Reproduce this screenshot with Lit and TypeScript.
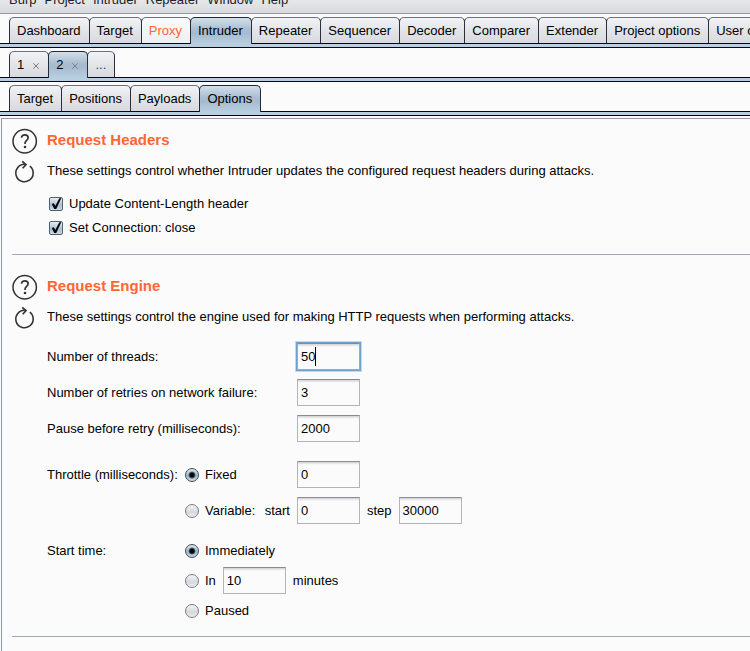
import { LitElement, html, css, svg, nothing } from "lit";
import { customElement, property, state } from "lit/decorators.js";
import { classMap } from "lit/directives/class-map.js";

interface Tab {
  label: string;
  closable?: boolean;
  kind?: "alert" | "more";
}

const MENUS = ["Burp", "Project", "Intruder", "Repeater", "Window", "Help"];

const TOOLS: Tab[] = [
  { label: "Dashboard" },
  { label: "Target" },
  { label: "Proxy", kind: "alert" },
  { label: "Intruder" },
  { label: "Repeater" },
  { label: "Sequencer" },
  { label: "Decoder" },
  { label: "Comparer" },
  { label: "Extender" },
  { label: "Project options" },
  { label: "User options" },
];

const ATTACKS: Tab[] = [
  { label: "1", closable: true },
  { label: "2", closable: true },
  { label: "...", kind: "more" },
];

const PAGES: Tab[] = [
  { label: "Target" },
  { label: "Positions" },
  { label: "Payloads" },
  { label: "Options" },
];

@customElement("tab-strip")
export class TabStrip extends LitElement {
  @property({ attribute: false }) tabs: Tab[] = [];
  @property({ type: Number }) selected = 0;

  static styles = css`
    :host {
      display: block;
      padding-top: 3px;
    }
    .tabs {
      display: flex;
      align-items: flex-start;
      height: 26px;
      padding-left: 9px;
      border-bottom: 1px solid #06061a;
    }
    .tab {
      flex: none;
      display: flex;
      align-items: center;
      box-sizing: border-box;
      height: 26px;
      margin: 0 -1px 0 0;
      padding: 0 8px 0 7px;
      border: 1px solid #2c2e3c;
      border-top-color: #6c7078;
      border-bottom: 0;
      border-radius: 5px 5px 0 0;
      background: linear-gradient(#f2f3f6, #e2e4e8 50%, #d8dae0);
      color: #000;
      font: 13px/16px "Liberation Sans", Arial, sans-serif;
      white-space: nowrap;
    }
    .alert {
      background: linear-gradient(#fafafc, #eeeff2);
      color: #ff6633;
    }
    .more {
      color: #2c4a6c;
    }
    .selected {
      height: 27px;
      border-color: #1c2a3a;
      border-bottom: 0;
      background: linear-gradient(#d4dfe8, #a8bdd1 45%, #a6bbcf 60%, #b8cfe0);
    }
    .close {
      width: 6px;
      height: 6px;
      margin: 2px 1px 0 9px;
      stroke: #7c8086;
    }
    .band {
      height: 3px;
      background: #b8cfe0;
      border-bottom: 1px solid #06061a;
    }
  `;

  render() {
    return html`
      <div class="tabs" role="tablist">
        ${this.tabs.map(
          (t, i) => html`<button
            role="tab"
            aria-selected=${i === this.selected ? "true" : "false"}
            class=${classMap({
              tab: true,
              selected: i === this.selected,
              alert: t.kind === "alert",
              more: t.kind === "more",
            })}
            @click=${() => (this.selected = i)}
          >${t.label}${t.closable
              ? html`<svg class="close" viewBox="0 0 6 6" aria-hidden="true">
                  <path d="M0.3 0.3L5.7 5.7M5.7 0.3L0.3 5.7" />
                </svg>`
              : nothing}</button>`
        )}
      </div>
      <div class="band"></div>
    `;
  }
}

const helpIcon = svg`
  <circle cx="12.7" cy="13.3" r="11.7" fill="none" stroke="#333" stroke-width="1.5" />
  <path d="M9.4 9.7C9.7 7.9 11 6.9 12.8 6.9C14.8 6.9 16.1 8.1 16.1 9.8C16.1 12.2 13 12.6 13 15.3V16"
    fill="none" stroke="#333" stroke-width="1.7" />
  <circle cx="13" cy="19" r="1.3" fill="#333" />`;

const resetIcon = svg`
  <path d="M15.8 6.1A8.7 8.7 0 1 1 10.8 4.3" fill="none" stroke="#333" stroke-width="1.6" />
  <path d="M8.2 1.4L12 4.5L8.7 8.2" fill="none" stroke="#333" stroke-width="1.7" />`;

@customElement("settings-section")
export class SettingsSection extends LitElement {
  @property() heading = "";
  @property() description = "";

  static styles = css`
    :host {
      display: block;
      margin-left: 10px;
      border-bottom: 1px solid #a4a8b6;
    }
    .head,
    .about {
      display: grid;
      grid-template-columns: 35px 1fr;
      align-items: center;
    }
    .head {
      height: 26px;
    }
    .about {
      height: 36px;
    }
    button {
      display: block;
      justify-self: start;
      padding: 0;
      border: 0;
      background: none;
    }
    .help svg {
      display: block;
      width: 26px;
      height: 26px;
    }
    .reset {
      padding-left: 2px;
    }
    .reset svg {
      display: block;
      width: 22px;
      height: 24px;
    }
    h2 {
      margin: 0 0 3px;
      color: #ff6633;
      font: bold 15px/18px "Liberation Sans", Arial, sans-serif;
    }
    p {
      margin: 0 0 3px;
      white-space: nowrap;
    }
    .body {
      padding-left: 35px;
    }
  `;

  render() {
    return html`
      <div class="head">
        <button class="help" aria-label="Help">
          <svg viewBox="0 0 26 26">${helpIcon}</svg>
        </button>
        <h2>${this.heading}</h2>
      </div>
      <div class="about">
        <button class="reset" aria-label="Restore defaults">
          <svg viewBox="0 0 22 24">${resetIcon}</svg>
        </button>
        <p>${this.description}</p>
      </div>
      <div class="body"><slot></slot></div>
    `;
  }
}

@customElement("app-root")
export class AppRoot extends LitElement {
  @state() private throttle = "fixed";
  @state() private start = "now";

  static styles = css`
    :host {
      display: flex;
      flex-direction: column;
      min-height: 100vh;
      overflow: hidden;
      background: #fbfbfb;
      color: #000;
      font: 13px/16px "Liberation Sans", Arial, sans-serif;
    }
    .menu {
      display: flex;
      align-items: flex-end;
      gap: 8px;
      height: 13px;
      padding-left: 9px;
      overflow: hidden;
      border-bottom: 1px solid #9498a0;
      background: linear-gradient(#e6e7ea, #d8dae0);
    }
    .menu button {
      margin: 0 0 5px;
      padding: 0;
      border: 0;
      background: none;
      color: #222;
      font: inherit;
    }
    .panel {
      flex: 1;
      margin: 2px 0 0 1px;
      padding-top: 9px;
      border: solid #9498a8;
      border-width: 1px 0 0 1px;
    }
    settings-section + settings-section {
      margin-top: 19px;
    }
    .checks {
      display: flex;
      flex-direction: column;
      padding: 2px 0 14px 2px;
    }
    .checks label {
      height: 24px;
    }
    label {
      display: flex;
      align-items: center;
      gap: 6px;
      white-space: nowrap;
    }
    input {
      box-sizing: border-box;
      flex: none;
      margin: 0;
      appearance: none;
      outline: none;
    }
    input[type="checkbox"] {
      width: 14px;
      height: 14px;
      border: 1px solid #52616f;
      border-radius: 2px;
      background: linear-gradient(#e4edf4, #a9bfd2 60%, #c6dae8);
    }
    input[type="checkbox"]:checked::before {
      content: "";
      display: block;
      width: 12px;
      height: 12px;
      background: #000;
      clip-path: polygon(14% 50%, 32% 44%, 44% 66%, 78% 2%, 94% 2%, 52% 92%, 36% 92%);
    }
    input[type="radio"] {
      width: 14px;
      height: 14px;
      border: 1px solid #777b82;
      border-radius: 50%;
      background: linear-gradient(#f4f5f7, #d6d8dd 60%, #eceef0);
    }
    input[type="radio"]:checked {
      border-color: #3c4c5c;
      background: radial-gradient(circle, #050505 0 2px, transparent 4px),
        linear-gradient(#dbe6ef, #9fb8cd 60%, #c8dcea);
    }
    input[type="text"] {
      width: 63px;
      height: 27px;
      padding: 0 3px;
      border: 1px solid #b4b4b8;
      border-top-color: #8c8c90;
      background: linear-gradient(#d0d0d3, #f0f0f1 2px, #fbfbfb 3px);
      color: #000;
      font: inherit;
    }
    .active {
      position: relative;
      display: flex;
      box-shadow: 0 0 0 1px #72a0cc, 0 0 0 2px #c2d8ec;
    }
    .active input[type="text"] {
      border-color: #8ab0d4;
      border-top-color: #7c8ca0;
    }
    .caret {
      position: absolute;
      left: 18px;
      top: 4px;
      width: 1px;
      height: 19px;
      background: #000;
    }
    .form {
      display: flex;
      flex-direction: column;
      gap: 19px;
      padding: 7px 0 12px;
    }
    .group {
      display: flex;
      flex-direction: column;
      gap: 9px;
    }
    .group.times {
      gap: 3px;
      margin-top: -6px;
    }
    .row {
      display: grid;
      grid-template-columns: 138px 112px 1fr;
      align-items: center;
      height: 27px;
    }
    .wide {
      grid-column: span 2;
    }
    .field,
    .split {
      display: flex;
      align-items: center;
    }
    .field {
      justify-self: start;
      gap: 7px;
    }
    .split {
      justify-content: space-between;
      padding-right: 7px;
    }
    .choices {
      grid-column: 2 / 4;
    }
  `;

  private radio(group: "throttle" | "start", value: string, text: string) {
    return html`<label
      ><input
        type="radio"
        name=${group}
        .checked=${this[group] === value}
        @change=${() => (this[group] = value)}
      />${text}</label>`;
  }

  render() {
    return html`
      <nav class="menu">${MENUS.map((m) => html`<button>${m}</button>`)}</nav>
      <tab-strip .tabs=${TOOLS} selected="3"></tab-strip>
      <tab-strip .tabs=${ATTACKS} selected="1"></tab-strip>
      <tab-strip .tabs=${PAGES} selected="3"></tab-strip>
      <main class="panel">
        <settings-section
          heading="Request Headers"
          description="These settings control whether Intruder updates the configured request headers during attacks."
        >
          <div class="checks">
            <label><input type="checkbox" checked />Update Content-Length header</label>
            <label><input type="checkbox" checked />Set Connection: close</label>
          </div>
        </settings-section>
        <settings-section
          heading="Request Engine"
          description="These settings control the engine used for making HTTP requests when performing attacks."
        >
          <div class="form">
            <div class="group">
              <div class="row">
                <label class="wide" for="threads">Number of threads:</label>
                <span class="field"><span class="active"
                  ><input id="threads" type="text" value="50" /><span class="caret"></span></span></span>
              </div>
              <div class="row">
                <label class="wide" for="retries">Number of retries on network failure:</label>
                <span class="field"><input id="retries" type="text" value="3" /></span>
              </div>
              <div class="row">
                <label class="wide" for="pause">Pause before retry (milliseconds):</label>
                <span class="field"><input id="pause" type="text" value="2000" /></span>
              </div>
            </div>
            <div class="group" role="radiogroup" aria-labelledby="throttle">
              <div class="row">
                <span id="throttle">Throttle (milliseconds):</span>
                ${this.radio("throttle", "fixed", "Fixed")}
                <span class="field"><input type="text" aria-label="Fixed throttle" value="0" /></span>
              </div>
              <div class="row">
                <span></span>
                <span class="split">
                  ${this.radio("throttle", "variable", "Variable:")}
                  <label for="from">start</label>
                </span>
                <span class="field">
                  <input id="from" type="text" value="0" />
                  <label for="step">step</label>
                  <input id="step" type="text" value="30000" />
                </span>
              </div>
            </div>
            <div class="group times" role="radiogroup" aria-labelledby="when">
              <div class="row">
                <span id="when">Start time:</span>
                ${this.radio("start", "now", "Immediately")}
              </div>
              <div class="row">
                <span class="field choices">
                  ${this.radio("start", "delay", "In")}
                  <input id="delay" type="text" value="10" />
                  <label for="delay">minutes</label>
                </span>
              </div>
              <div class="row">
                <span class="choices">${this.radio("start", "paused", "Paused")}</span>
              </div>
            </div>
          </div>
        </settings-section>
      </main>
    `;
  }
}
